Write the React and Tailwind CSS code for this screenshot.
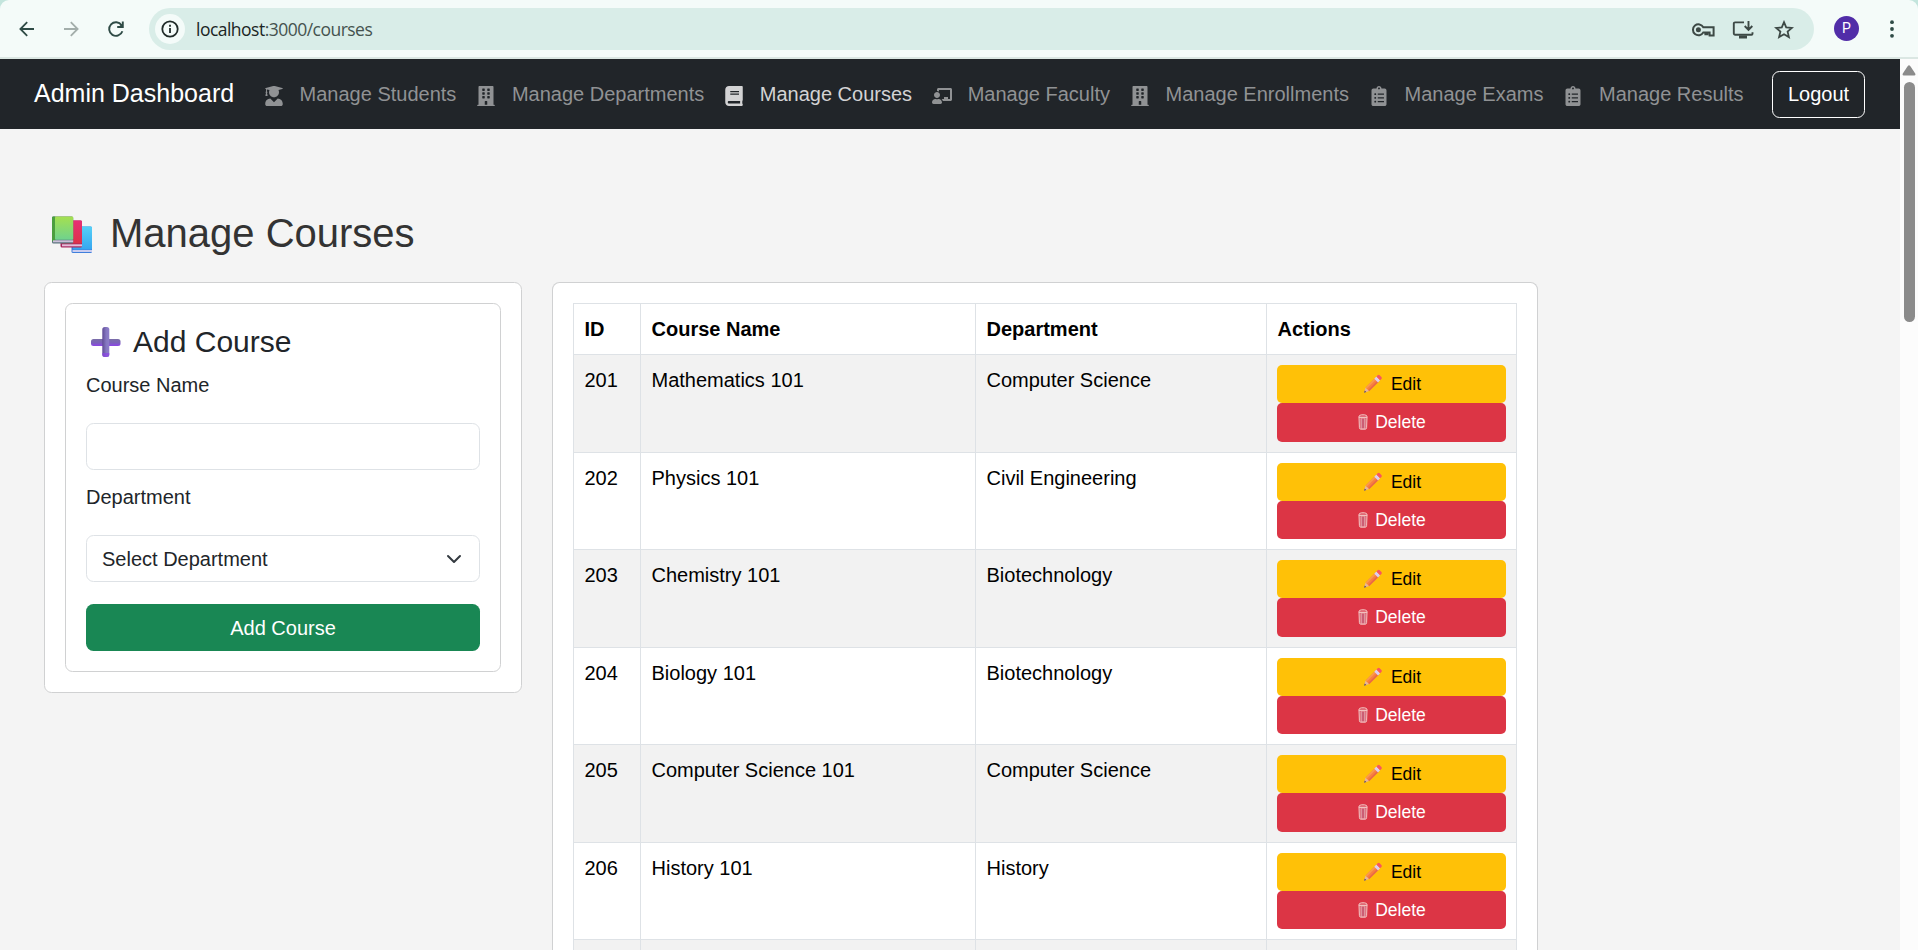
import React from "react";
import {
  FaUserGraduate,
  FaBuilding,
  FaBook,
  FaChalkboardTeacher,
  FaClipboardList,
} from "react-icons/fa";

const links = [
  { label: "Manage Students", Icon: FaUserGraduate },
  { label: "Manage Departments", Icon: FaBuilding },
  { label: "Manage Courses", Icon: FaBook, active: true },
  { label: "Manage Faculty", Icon: FaChalkboardTeacher },
  { label: "Manage Enrollments", Icon: FaBuilding },
  { label: "Manage Exams", Icon: FaClipboardList },
  { label: "Manage Results", Icon: FaClipboardList },
];

const courses = [
  [201, "Mathematics 101", "Computer Science"],
  [202, "Physics 101", "Civil Engineering"],
  [203, "Chemistry 101", "Biotechnology"],
  [204, "Biology 101", "Biotechnology"],
  [205, "Computer Science 101", "Computer Science"],
  [206, "History 101", "History"],
];

function BooksIcon() {
  return (
    <svg width="42" height="38" viewBox="0 0 42 38" className="mt-1 shrink-0">
      <defs>
        <linearGradient id="bookGreen" x1="0" y1="0" x2="0" y2="1">
          <stop offset="0" stopColor="#a5e04f" />
          <stop offset="1" stopColor="#6fd28e" />
        </linearGradient>
        <linearGradient id="bookBlue" x1="0" y1="0" x2="0" y2="1">
          <stop offset="0" stopColor="#56d0f6" />
          <stop offset="1" stopColor="#36a6f0" />
        </linearGradient>
        <linearGradient id="bookRed" x1="0" y1="0" x2="0" y2="1">
          <stop offset="0" stopColor="#e62f75" />
          <stop offset="1" stopColor="#dc3248" />
        </linearGradient>
      </defs>
      <rect x="19.5" y="10.5" width="20.5" height="26.5" rx="1.5" fill="#3f7fdc" />
      <rect x="21" y="10.5" width="19" height="23" rx="1" fill="url(#bookBlue)" />
      <rect x="20.5" y="34" width="19.5" height="2" fill="#c9cdf0" />
      <rect x="8.5" y="4.5" width="21.5" height="27" rx="1.5" fill="#a8265c" />
      <rect x="10" y="4.5" width="20" height="23" rx="1" fill="url(#bookRed)" />
      <rect x="10" y="28.3" width="20" height="2" fill="#e3bfdc" />
      <rect x="0" y="0.5" width="21.2" height="27" rx="1.5" fill="#56707a" />
      <rect x="0" y="0.5" width="3.5" height="25" rx="1" fill="#4b9e3f" />
      <rect x="3" y="0.5" width="18.2" height="23.3" rx="1" fill="url(#bookGreen)" />
      <rect x="1" y="24.3" width="20.2" height="2" fill="#cbbfd8" />
    </svg>
  );
}

function PlusIcon() {
  return (
    <svg width="30" height="30" viewBox="0 0 30 30" className="shrink-0">
      <defs>
        <linearGradient id="plusH" x1="0" y1="0" x2="0" y2="1">
          <stop offset="0" stopColor="#7a6ea8" />
          <stop offset="0.5" stopColor="#7b62b8" />
          <stop offset="1" stopColor="#8b45e6" />
        </linearGradient>
        <linearGradient id="plusV" x1="0" y1="0" x2="1" y2="0">
          <stop offset="0" stopColor="#5f4a96" />
          <stop offset="0.55" stopColor="#8577c0" />
          <stop offset="1" stopColor="#8d7ccb" />
        </linearGradient>
      </defs>
      <rect x="0" y="12" width="29.5" height="7" rx="2.5" fill="url(#plusH)" />
      <rect x="11.3" y="0" width="7" height="30" rx="2.5" fill="url(#plusV)" />
      <path d="M11.3 26h7v1.500a2.500 2.500 0 0 1-2.500 2.500h-2a2.500 2.500 0 0 1-2.500-2.500z" fill="#8b45e6" opacity="0.7" />
    </svg>
  );
}

function PencilIcon() {
  return (
    <svg width="20" height="20" viewBox="0 0 20 20" className="shrink-0">
      <path d="M1 18.800 2.600 13.400 6.300 17.100z" fill="#e8b49a" />
      <path d="M1 18.800 1.700 16.400 3.400 18.100z" fill="#5b4a55" />
      <path d="M2.600 13.400 11.800 4.200 15.500 7.900 6.300 17.100z" fill="#f9803f" />
      <path d="M2.600 13.400 11.800 4.200 13 5.400 3.800 14.600z" fill="#fb9a4b" />
      <path d="M5.100 15.900 14.300 6.700 15.500 7.900 6.300 17.100z" fill="#ea6a45" />
      <path d="M11.300 4.700 13.400 2.600 17.100 6.300 15 8.400z" fill="#dccff0" />
      <path d="M13.400 2.600 14.700 1.300a1.400 1.400 0 0 1 2 0l1.700 1.700a1.400 1.400 0 0 1 0 2L17.100 6.300z" fill="#f8565f" />
    </svg>
  );
}

function TrashIcon() {
  return (
    <svg width="10" height="16" viewBox="0 0 10 16" className="shrink-0">
      <path d="M1 3.500h8l-.4 10.200q-.1 1.500-1.400 1.500H2.800q-1.300 0-1.400-1.500z" fill="#d9606f" stroke="#f3c6c4" strokeWidth="1" />
      <path d="M3.300 4.500v10M5 4.500v10M6.700 4.500v10" stroke="#f7e2dc" strokeWidth="0.900" />
      <path d="M4.150 5v9M5.850 5v9" stroke="#b3264a" strokeWidth="0.800" />
      <path d="M0.700 3.300Q1 .8 3.500.8h3Q9 .8 9.300 3.300z" fill="#dc5563" stroke="#f3c6c4" strokeWidth="1" />
    </svg>
  );
}

function BrowserBar() {
  return (
    <div className="bg-[#c3e5dd]">
      <div className="flex h-[59px] items-start rounded-t-[9px] border-b-2 border-[#dbe7e3] bg-[#f4fbf9] pt-2">
        <div className="flex h-[42px] w-[149px] items-center pl-[19px] text-[#2f4b46]">
          <svg width="16" height="16" viewBox="0 0 16 16" fill="none" stroke="currentColor" strokeWidth="1.800">
            <path d="M15 8H2M8.200 1.200 1.400 8l6.800 6.800" />
          </svg>
          <svg width="16" height="16" viewBox="0 0 16 16" fill="none" stroke="#a3aeab" strokeWidth="1.800" className="ml-7">
            <path d="M1 8h13M7.800 1.200 14.600 8l-6.800 6.800" />
          </svg>
          <svg width="18" height="18" viewBox="0 0 18 18" fill="none" className="ml-7">
            <path d="M15.400 11.200A6.800 6.800 0 1 1 14.600 5.200" stroke="currentColor" strokeWidth="1.900" />
            <path d="M15.800 1.500v5.500h-5.600" stroke="currentColor" strokeWidth="1.900" />
            <path d="M12 6.500h4V3z" fill="currentColor" />
          </svg>
        </div>
        <div className="flex h-[42px] w-[1665px] items-center rounded-full bg-[#d9ede8] pr-5 pl-1.5">
          <div className="flex size-[30px] items-center justify-center rounded-full bg-[#f4fbf9]">
            <svg width="18" height="18" viewBox="0 0 18 18" fill="none" stroke="#1f2a28" strokeWidth="1.800">
              <circle cx="9" cy="9" r="7.700" />
              <path d="M9 8v5M9 4.800v2" />
            </svg>
          </div>
          <div className="ml-[11px] pt-px font-['Open_Sans',sans-serif] text-[17.500px] tracking-[-0.520px] text-[#45534f]">
            <span className="text-[#1b2523]">localhost</span>:3000/courses
          </div>
          <div className="ml-auto flex items-center pt-px text-[#3d4945]">
            <svg width="24" height="16" viewBox="0 0 24 16" fill="none" stroke="currentColor" strokeWidth="2">
              <path d="M12.300 5.200H22.600V13.400H18.600V10.400H16.400V12.200H14.400V10.400H12.300A5.500 5.500 0 1 1 12.300 5.200Z" />
              <circle cx="7.400" cy="7.800" r="2.500" fill="currentColor" stroke="none" />
            </svg>
            <svg width="22" height="20" viewBox="0 0 22 20" fill="none" stroke="currentColor" strokeWidth="1.900" className="ml-[17px]">
              <path d="M12 2.400H3a1.200 1.200 0 0 0-1.200 1.200v10a1.200 1.200 0 0 0 1.200 1.200h16.500a1 1 0 0 0 1-1v-1.600M16.500 1v8.200M12.700 6l3.800 3.800L20.300 6" />
              <path d="M7 17h8" strokeWidth="3" />
            </svg>
            <svg width="20" height="20" viewBox="0 0 20 20" fill="none" stroke="currentColor" strokeWidth="1.800" className="ml-5">
              <path d="m10 2.200 2.200 5.200 5.700.5-4.300 3.700 1.300 5.500L10 14.200l-4.900 2.900 1.300-5.500L2.100 7.900l5.700-.5z" />
            </svg>
          </div>
        </div>
        <div className="flex h-[41px] flex-1 items-center pl-5">
          <div className="flex size-[25px] items-center justify-center rounded-full bg-[#512da8] font-[Roboto,sans-serif] text-[14px] text-white">
            P
          </div>
          <svg width="6" height="18" viewBox="0 0 6 18" fill="#2f4b46" className="ml-[30px]">
            <circle cx="3" cy="2.200" r="1.900" />
            <circle cx="3" cy="9" r="1.900" />
            <circle cx="3" cy="15.800" r="1.900" />
          </svg>
        </div>
      </div>
    </div>
  );
}

function Navbar() {
  return (
    <nav className="flex h-[70px] items-center bg-[#212529] pl-[34px]">
      <div className="mr-5 w-[200px] text-[25px] whitespace-nowrap text-white">Admin Dashboard</div>
      <div className="flex">
        {links.map(({ label, Icon, active }) => (
          <a
            key={label}
            className={
              active
                ? "flex h-[30px] items-start px-2.5 leading-[30px] whitespace-pre text-[#d3d3d4]"
                : "flex h-[30px] items-start px-2.5 leading-[30px] whitespace-pre text-[#909294]"
            }
          >
            <Icon className="mt-[7px] mr-2.5 size-5" />
            <span>{" " + label}</span>
          </a>
        ))}
      </div>
      <button className="ml-[18.500px] h-[47px] w-[93px] rounded-[7.500px] border border-white text-white">Logout</button>
    </nav>
  );
}

function CourseForm() {
  return (
    <section className="h-[411px] w-[478px] rounded-[7.500px] border border-[#d0d1d2] bg-white p-5">
      <div className="flex h-[369px] flex-col rounded-[7.500px] border border-[#d0d1d2] px-5 pt-5">
        <h2 className="flex h-9 items-center pl-[5px] text-[30px]">
          <PlusIcon />
          <span className="mb-0.5 ml-[12px]">Add Course</span>
        </h2>
        <label className="mt-[10px] leading-[30px]">Course Name</label>
        <input className="mt-[23px] h-[47px] shrink-0 rounded-[7.500px] border border-[#dee2e6] bg-white px-[15px]" />
        <label className="mt-3 leading-[30px]">Department</label>
        <div className="mt-[23px] flex h-[47px] shrink-0 items-center justify-between rounded-[7.500px] border border-[#dee2e6] pr-[17px] pl-[15px]">
          Select Department
          <svg width="16" height="16" viewBox="0 0 16 16" fill="none" stroke="#343a40" strokeWidth="2" strokeLinecap="round" strokeLinejoin="round">
            <path d="m2 5 6 6 6-6" />
          </svg>
        </div>
        <button className="mt-[22px] h-[47px] shrink-0 rounded-[7.500px] bg-[#198754] text-white">Add Course</button>
      </div>
    </section>
  );
}

function CourseTable() {
  return (
    <section className="ml-[30px] w-[986px] rounded-t-[7.500px] border border-b-0 border-[#d0d1d2] bg-white p-5 text-black">
      <div className="border-t border-l border-[#dee2e6]">
        <div className="grid h-[51px] grid-cols-[67px_335px_291px_250px] font-bold">
          {["ID", "Course Name", "Department", "Actions"].map((h) => (
            <div key={h} className="border-r border-b border-[#dee2e6] pt-2.5 pl-[10.500px] leading-[30px]">
              {h}
            </div>
          ))}
        </div>
        {courses.map(([id, name, dept]) => (
          <div
            key={id}
            className="grid h-[97.500px] grid-cols-[67px_335px_291px_250px] bg-white even:bg-[#f2f2f2]"
          >
            {[id, name, dept].map((v, i) => (
              <div key={i} className="border-r border-b border-[#dee2e6] pt-2.5 pl-[10.500px] leading-[30px]">
                {v}
              </div>
            ))}
            <div className="flex flex-col border-r border-b border-[#dee2e6] p-2.5 text-[17.500px]">
              <button className="flex h-[38.250px] items-center justify-center rounded-[5px] bg-[#ffc107] pl-px">
                <PencilIcon />
                <span className="ml-2">Edit</span>
              </button>
              <button className="flex h-[38.250px] items-center justify-center rounded-[5px] bg-[#dc3545] pl-px text-white">
                <TrashIcon />
                <span className="ml-[7px]">Delete</span>
              </button>
            </div>
          </div>
        ))}
        <div className="grid h-[97.500px] grid-cols-[67px_335px_291px_250px] bg-[#f2f2f2]">
          <div className="border-r border-[#dee2e6]" />
          <div className="border-r border-[#dee2e6]" />
          <div className="border-r border-[#dee2e6]" />
          <div className="border-r border-[#dee2e6]" />
        </div>
      </div>
    </section>
  );
}

export default function App() {
  return (
    <div className="flex h-[950px] flex-col overflow-hidden font-['Liberation_Sans',Arial,sans-serif] text-[20px] text-[#212529]">
      <BrowserBar />
      <div className="flex min-h-0 flex-1">
        <div className="w-[1900px] overflow-hidden bg-[#f4f4f4]">
          <Navbar />
          <main className="px-11 pt-[79px]">
            <h1 className="flex h-[50px] items-center pl-2 text-[40px] text-[#333]">
              <BooksIcon />
              <span className="ml-[16px]">Manage Courses</span>
            </h1>
            <div className="mt-6 flex items-start">
              <CourseForm />
              <CourseTable />
            </div>
          </main>
        </div>
        <div className="flex w-[18px] flex-col items-center bg-[#fcfcfc] pt-1.5">
          <svg width="14" height="11" viewBox="0 0 14 11" fill="#8b8b8b">
            <path d="M5.800.9 .8 8.500Q0 10.500 1.800 10.500h10.400Q14 10.500 13.200 8.500L8.200.9Q7-.5 5.800.9z" />
          </svg>
          <div className="mt-1.5 h-[240px] w-[11px] rounded-full bg-[#8b8b8b]" />
        </div>
      </div>
    </div>
  );
}
